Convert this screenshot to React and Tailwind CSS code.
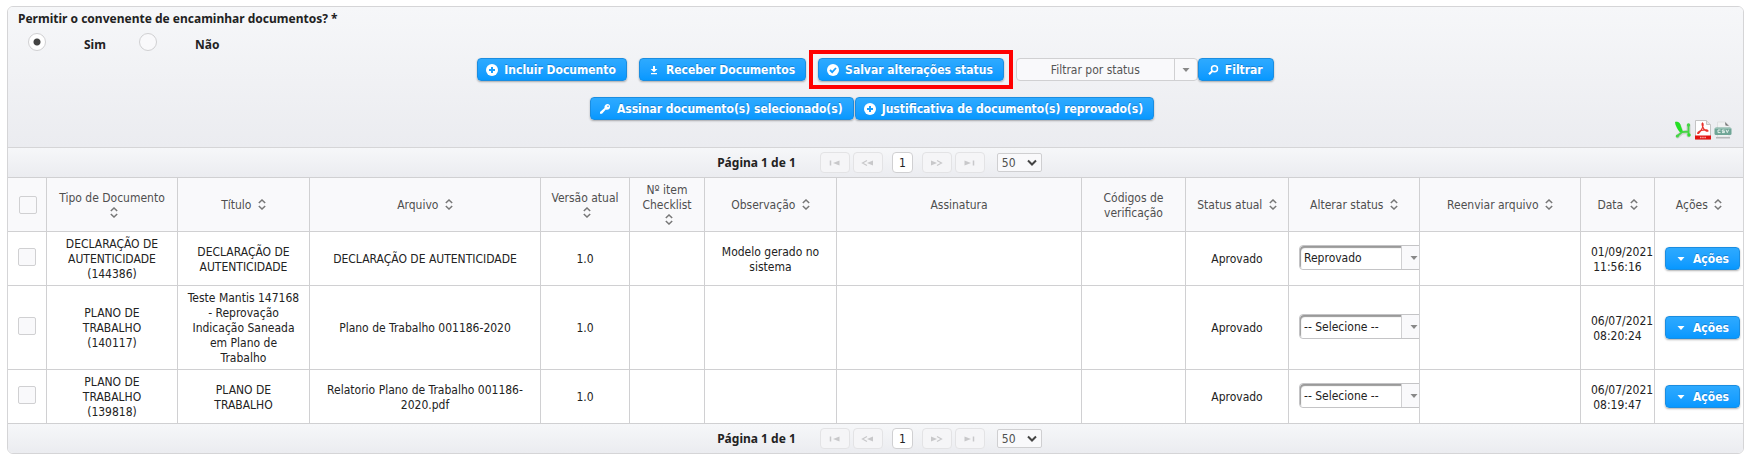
const columns = [
  { width: "w-[131px]", label: "Tipo de Documento", sortable: true },
  { width: "w-[132px]", label: "Título", sortable: true },
  { width: "w-[231px]", label: "Arquivo", sortable: true },
  { width: "w-[89px]", label: "Versão atual", sortable: true },
  { width: "w-[75px]", label: "Nº item Checklist", sortable: true },
  { width: "w-[132px]", label: "Observação", sortable: true },
  { width: "w-[245px]", label: "Assinatura", sortable: false },
  { width: "w-[104px]", label: "Códigos de verificação", sortable: false },
  { width: "w-[103px]", label: "Status atual", sortable: true },
  { width: "w-[131px]", label: "Alterar status", sortable: true },
  { width: "w-[161px]", label: "Reenviar arquivo", sortable: true },
  { width: "w-[74px]", label: "Data", sortable: true },
  { width: "w-[89px]", label: "Ações", sortable: true },
];

const rows = [
  {
    id: "144386",
    type: "DECLARAÇÃO DE AUTENTICIDADE (144386)",
    cells: ["DECLARAÇÃO DE AUTENTICIDADE", "DECLARAÇÃO DE AUTENTICIDADE", "1.0", "", "Modelo gerado no sistema", "", "", "Aprovado"],
    status: "Reprovado",
    date: "01/09/2021 11:56:16",
  },
  {
    id: "140117",
    type: "PLANO DE TRABALHO (140117)",
    cells: ["Teste Mantis 147168 - Reprovação Indicação Saneada em Plano de Trabalho", "Plano de Trabalho 001186-2020", "1.0", "", "", "", "", "Aprovado"],
    status: "-- Selecione --",
    date: "06/07/2021 08:20:24",
  },
  {
    id: "139818",
    type: "PLANO DE TRABALHO (139818)",
    cells: ["PLANO DE TRABALHO", "Relatorio Plano de Trabalho 001186-2020.pdf", "1.0", "", "", "", "", "Aprovado"],
    status: "-- Selecione --",
    date: "06/07/2021 08:19:47",
  },
];

const barGradient = "bg-linear-to-b from-[#f6f7f9] to-[#ebecf0]";

function PlusIcon() {
  return (
    <svg className="size-4" viewBox="0 0 16 16" aria-hidden="true">
      <circle cx="8" cy="8" r="6" fill="#fff" />
      <path d="M8 5v6M5 8h6" stroke="#189fff" strokeWidth="2" />
    </svg>
  );
}

function CheckIcon() {
  return (
    <svg className="size-4" viewBox="0 0 16 16" aria-hidden="true">
      <circle cx="8" cy="8" r="6" fill="#fff" />
      <path d="M5 8l2.200 2.200L11 6" fill="none" stroke="#189fff" strokeWidth="1.800" />
    </svg>
  );
}

function DownloadIcon() {
  return (
    <svg className="size-4" viewBox="0 0 16 16" aria-hidden="true">
      <path d="M7 4h2v3h2.500L8 10.200 4.500 7H7zM5 11h6v1.300H5z" fill="#fff" />
    </svg>
  );
}

function KeyIcon() {
  return (
    <svg className="size-4" viewBox="0 0 16 16" aria-hidden="true">
      <path d="M9.600 3.200c1.900-.7 4 .9 3.400 3.200-.5 2-2.600 2.700-4.200 2L5 12.800H3V11L7.500 7C7.200 5.400 8 3.800 9.600 3.200z" fill="#fff" />
      <circle cx="11" cy="5.300" r=".8" fill="#189fff" />
    </svg>
  );
}

function SearchIcon() {
  return (
    <svg className="size-4" viewBox="0 0 16 16" aria-hidden="true">
      <circle cx="9.500" cy="6.800" r="3" fill="none" stroke="#fff" strokeWidth="1.500" />
      <path d="M7.300 9L4 12.300" stroke="#fff" strokeWidth="2" />
    </svg>
  );
}

function CaretIcon({ className }) {
  return (
    <svg className={className} width="8" height="8" viewBox="0 0 8 8" aria-hidden="true">
      <path d="M.5 2h7L4 6z" fill="currentColor" />
    </svg>
  );
}

function SortIcon() {
  return (
    <svg className="inline-block h-[11px] w-2 align-[-1px] text-[#777]" viewBox="0 0 8 11" aria-hidden="true">
      <path d="M.8 4L4 1l3.200 3M.8 7L4 10l3.200-3" fill="none" stroke="currentColor" strokeWidth="1.500" />
    </svg>
  );
}

function ExcelIcon() {
  return (
    <svg width="18" height="20" viewBox="0 0 18 20" aria-hidden="true">
      <path d="M3 3.500C6 5 6 10 8 12.500M3.500 16.500L8 12.500 14.500 12M14.500 5.500v10" fill="none" stroke="#c9cfc9" strokeWidth="4" strokeLinecap="round" />
      <path d="M1 2C4.500 1.200 6.500 3.500 7 6.500L9 12c-.6 1-2.200 1-3.200 0C3.500 9.500 1.500 6 1 2z" fill="#25e025" />
      <path d="M3.500 16L8 12l6.500-.5M14.500 5.500V14" fill="none" stroke="#45d645" strokeWidth="1.800" strokeLinecap="round" />
      <circle cx="14.500" cy="5" r="1.700" fill="#45d645" />
      <circle cx="15" cy="15" r="1.700" fill="#2fdb2f" />
      <circle cx="3.300" cy="16" r="1.500" fill="#45d645" />
    </svg>
  );
}

function PdfIcon() {
  return (
    <svg width="18" height="20" viewBox="0 0 18 20" aria-hidden="true">
      <path d="M1.500.5h11l4 4V19h-15z" fill="#fff" stroke="#c4c4c4" />
      <path d="M12.500.5v4h4" fill="#e6e6e6" stroke="#c4c4c4" />
      <path d="M1 15.500h16V19.500H1z" fill="#e3120f" />
      <path d="M6 17.500h6" stroke="#f6a5a3" strokeWidth="1.500" strokeDasharray="1.500 .7" />
      <path d="M8.500 3c1.300 1.200.2 4.500-1.400 7.200C6 12 4.700 13.700 3.800 13.500c-.8-.8 2-2.900 5-3.400 2.500-.5 5-.3 5.200.8-.6 1.200-3.600-.7-4.700-3C8.200 6 7.500 3.500 8.500 3z" fill="none" stroke="#e8352e" strokeWidth="1.200" />
    </svg>
  );
}

function CsvIcon() {
  return (
    <svg width="18" height="20" viewBox="0 0 18 20" aria-hidden="true">
      <path d="M3.500 2h8l3.500 3.500V17h-11.500z" fill="#f1f2f3" stroke="#dfe0e1" />
      <path d="M11 2l4 4-3.500-.5z" fill="#777" />
      <path d="M2 17.700h14" stroke="#b5b7b9" strokeWidth="1.500" />
      <rect x="0.500" y="7.500" width="17" height="7.500" rx="1.500" fill="#6fa596" />
      <path d="M1 8.500h16" stroke="#94bfb2" />
      <path d="M6.500 10H4v2.600h2.500M10.500 10H8.300v1.300h2.200v1.300H8M12 9.700l1.300 2.900 1.300-2.900" fill="none" stroke="#e3efeb" />
    </svg>
  );
}

function PageArrow({ kind }) {
  const paths = {
    first: <><path d="M3.500 2.500v5" stroke="currentColor" strokeWidth="1.500" /><path d="M12.500 2.500v5L6 5z" fill="currentColor" /></>,
    prev: <><path d="M7 2.500L2.500 5 7 7.500" fill="none" stroke="currentColor" strokeWidth="1.200" /><path d="M13 2.500v5L7 5z" fill="currentColor" /></>,
    next: <><path d="M2 2.500v5L8 5z" fill="currentColor" /><path d="M8 2.500L12.500 5 8 7.500" fill="none" stroke="currentColor" strokeWidth="1.200" /></>,
    last: <><path d="M2.500 2.500v5L9 5z" fill="currentColor" /><path d="M11.500 2.500v5" stroke="currentColor" strokeWidth="1.500" /></>,
  };
  return (
    <svg width="15" height="10" viewBox="0 0 15 10" aria-hidden="true">
      {paths[kind]}
    </svg>
  );
}

function PageButton({ kind, label }) {
  return (
    <button type="button" disabled aria-label={label} className="flex h-[21px] w-[30px] items-center justify-center rounded border border-[#e3e3e5] bg-[#f5f5f7] text-[#c8c8ca]">
      <PageArrow kind={kind} />
    </button>
  );
}

function Paginator({ label }) {
  return (
    <nav aria-label={label} className={`flex h-[29px] items-center justify-center pl-2 ${barGradient}`}>
      <span className="mr-6 font-['Noto_Sans',sans-serif] font-bold">Página 1 de 1</span>
      <div className="flex gap-[3px]">
        <PageButton kind="first" label="Primeira página" />
        <PageButton kind="prev" label="Página anterior" />
      </div>
      <button type="button" aria-current="page" className="mx-[9px] h-[21px] w-[21px] rounded border border-[#d0d0d2] bg-white leading-4">1</button>
      <div className="flex gap-[3px]">
        <PageButton kind="next" label="Próxima página" />
        <PageButton kind="last" label="Última página" />
      </div>
      <div className="ml-3 grid h-[19px] w-[45px] items-center rounded-xs border border-[#cfcfd1] bg-[#f9f9fb] text-[#4f4f4f]">
        <select aria-label="Linhas por página" className="col-start-1 row-start-1 w-full appearance-none pl-1 leading-4">
          <option>50</option>
        </select>
        <svg className="pointer-events-none col-start-1 row-start-1 mr-1 justify-self-end" width="10" height="8" viewBox="0 0 10 8" aria-hidden="true">
          <path d="M1 1.500l4 4 4-4" fill="none" stroke="#444" strokeWidth="2" />
        </svg>
      </div>
    </nav>
  );
}

function ActionButton({ icon, children }) {
  return (
    <button type="button" className="flex h-[23px] shrink-0 items-center gap-1 rounded border border-[#1b8de0] bg-linear-to-b from-[#2daaff] to-[#0698ff] pr-2.5 pl-1.5 leading-4 font-bold text-white shadow-[0_1px_2px_rgba(0,0,0,0.3)] text-shadow-[0_-1px_0_rgba(0,60,120,0.35)]">
      {icon}
      <span>{children}</span>
    </button>
  );
}

const checkbox = "block size-[18px] appearance-none rounded-xs border border-[#d0d0d2] bg-[#f9f9fb]";
const radio = "size-[18px] appearance-none rounded-full border border-[#d0d0d2] bg-[#f9f9fb] checked:bg-white checked:bg-[radial-gradient(circle,#444_3px,transparent_4px)]";

export default function App() {
  return (
    <main className="bg-white px-[7px] py-1.5 pr-4 font-['DejaVu_Sans_Condensed','DejaVu_Sans',sans-serif] text-xs leading-[15px] text-[#222]">
      <div className="overflow-hidden rounded-md border border-[#d5d5d7]">
        <section className={`border-b border-[#d5d5d7] pt-1 ${barGradient}`}>
          <fieldset className="px-2.5 font-['Noto_Sans',sans-serif] font-bold">
            <legend>Permitir o convenente de encaminhar documentos? *</legend>
            <div className="flex h-6 pt-[7px] pl-2.5">
              <div className="flex w-[111px] gap-[38px]">
                <input id="sim" type="radio" name="encaminhar" defaultChecked className={radio} />
                <label htmlFor="sim" className="pt-1">Sim</label>
              </div>
              <div className="flex gap-[38px]">
                <input id="nao" type="radio" name="encaminhar" className={radio} />
                <label htmlFor="nao" className="pt-1">Não</label>
              </div>
            </div>
          </fieldset>

          <div className="flex items-center justify-center">
            <ActionButton icon={<PlusIcon />}>Incluir Documento</ActionButton>
            <div className="mr-[3px] ml-3">
              <ActionButton icon={<DownloadIcon />}>Receber Documentos</ActionButton>
            </div>
            <div className="border-4 border-[#ff0000] px-[5px] py-1">
              <ActionButton icon={<CheckIcon />}>Salvar alterações status</ActionButton>
            </div>
            <div className="ml-[3px] flex h-[23px] w-[182px] overflow-hidden rounded border border-[#d0d0d2] bg-[#f9f9fb] text-[#555]">
              <select aria-label="Filtrar por status" className="min-w-0 flex-1 appearance-none border-r border-[#d0d0d2] text-center leading-4">
                <option>Filtrar por status</option>
              </select>
              <span className="flex w-[22px] items-center justify-center text-[#888]">
                <CaretIcon />
              </span>
            </div>
            <ActionButton icon={<SearchIcon />}>Filtrar</ActionButton>
          </div>

          <div className="mt-2 flex justify-center gap-px pr-[7px]">
            <ActionButton icon={<KeyIcon />}>Assinar documento(s) selecionado(s)</ActionButton>
            <ActionButton icon={<PlusIcon />}>Justificativa de documento(s) reprovado(s)</ActionButton>
          </div>

          <div className="flex h-[27px] justify-end gap-0.5 pr-[11px]">
            <a href="#excel" aria-label="Exportar para Excel"><ExcelIcon /></a>
            <a href="#pdf" aria-label="Exportar para PDF"><PdfIcon /></a>
            <a href="#csv" aria-label="Exportar para CSV"><CsvIcon /></a>
          </div>
        </section>

        <Paginator label="Paginação superior" />

        <table className="w-full table-fixed border-separate border-spacing-0 border-t border-[#d0d0d2] text-center">
          <thead className="bg-[#f9f9fb] text-[#4f4f4f]">
            <tr>
              <th scope="col" className="w-[38px] border-b border-[#d0d0d2] pl-[11px]">
                <input type="checkbox" aria-label="Selecionar todos" className={checkbox} />
              </th>
              {columns.map((column) => (
                <th key={column.label} scope="col" className={`${column.width} border-b border-l border-[#d0d0d2] px-2 pt-[5px] pb-[3px] font-normal`}>
                  {column.label}
                  {column.sortable && <>{" "}<span className="inline-block pl-[3px]"><SortIcon /></span></>}
                </th>
              ))}
            </tr>
          </thead>
          <tbody className="bg-white">
            {rows.map((row) => (
              <tr key={row.id}>
                <td className="border-b border-[#d0d0d2] pb-1 pl-2.5">
                  <input type="checkbox" aria-label={`Selecionar documento ${row.id}`} className={checkbox} />
                </td>
                <td className="border-b border-l border-[#d0d0d2] px-3 pt-[5px] pb-[3px]">{row.type}</td>
                {row.cells.map((text, i) => (
                  <td key={i} className="border-b border-l border-[#d0d0d2] px-2 pt-[5px] pb-[3px]">{text}</td>
                ))}
                <td className="overflow-hidden border-b border-l border-[#d0d0d2] pb-0.5 pl-2.5">
                  <div className="flex h-[25px] w-[132px] rounded border border-[#c4c4c6] bg-[#f9f9fb]">
                    <select aria-label={`Alterar status do documento ${row.id}`} className="w-[102px] appearance-none rounded-l border-r border-[#d0d0d2] bg-white pl-1 leading-4 shadow-[inset_1px_2px_1px_#999]">
                      <option>{row.status}</option>
                    </select>
                    <span className="flex items-center pl-2 text-[#888]"><CaretIcon /></span>
                  </div>
                </td>
                <td className="border-b border-l border-[#d0d0d2]" />
                <td className="border-b border-l border-[#d0d0d2] px-2.5 pt-[5px] pb-[3px]">{row.date}</td>
                <td className="border-b border-l border-[#d0d0d2] pl-2.5">
                  <ActionButton icon={<CaretIcon className="mr-1 ml-[5px]" />}>Ações</ActionButton>
                </td>
              </tr>
            ))}
          </tbody>
        </table>

        <Paginator label="Paginação inferior" />
      </div>
    </main>
  );
}
